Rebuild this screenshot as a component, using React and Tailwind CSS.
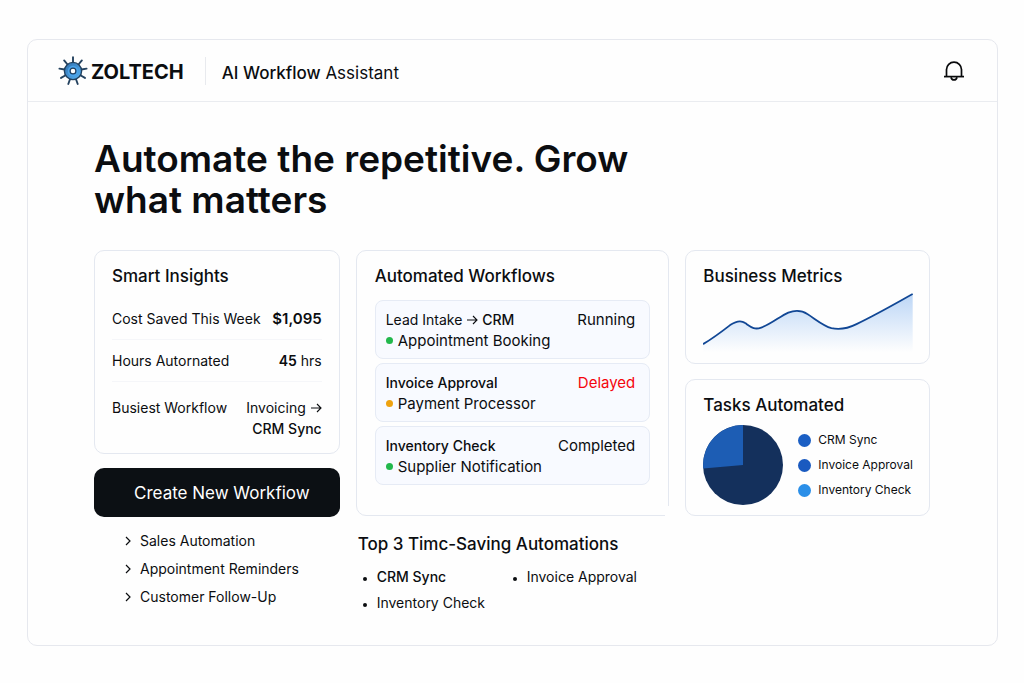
const cardClass = "rounded-[10px] border border-[#e4e8f0] bg-[#fefefe]";
const titleClass = "text-[17px] leading-6 font-medium";

const workflows = [
  { name: <>Lead Intake <Arrow /> <span className="font-medium">CRM</span></>, status: "Running", detail: "Appointment Booking", dot: "bg-[#22b84c]", tone: "" },
  { name: <span className="font-medium">Invoice Approval</span>, status: "Delayed", detail: "Payment Processor", dot: "bg-[#eea20f]", tone: "text-[#f5050d]" },
  { name: <span className="font-medium">Inventory Check</span>, status: "Completed", detail: "Supplier Notification", dot: "bg-[#22b84c]", tone: "" },
];

const legend = [
  { label: "CRM Sync", color: "bg-[#1b5fc4]" },
  { label: "Invoice Approval", color: "bg-[#1a5ac0]" },
  { label: "Inventory Check", color: "bg-[#2b8fe8]" },
];

const shortcuts = ["Sales Automation", "Appointment Reminders", "Customer Follow-Up"];

function Arrow() {
  return (
    <svg viewBox="0 0 12 12" className="inline-block size-3 align-[-1px]" fill="none" stroke="currentColor" strokeWidth="1.1" role="img" aria-label="to">
      <path d="M1 6h10M7 2l4 4-4 4" />
    </svg>
  );
}

function Logo() {
  const rays = [0, 40, 80, 120, 160, 200, 240, 280, 320];
  return (
    <svg viewBox="0 0 30 30" className="size-[30px]" aria-hidden="true">
      <defs>
        <linearGradient id="hub" x1="0" y1="0" x2="1" y2="1">
          <stop offset="0" stopColor="#2f6fae" />
          <stop offset="1" stopColor="#58b4f5" />
        </linearGradient>
      </defs>
      {rays.map((r) => (
        <path key={r} d="M15 6.500V1.200" stroke="#24425f" strokeWidth="1.9" strokeLinecap="round" transform={`rotate(${r} 15 15)`} />
      ))}
      <circle cx="15" cy="15" r="8.6" fill="url(#hub)" stroke="#22415f" strokeWidth="1.4" />
      <circle cx="15" cy="15" r="5.2" fill="#4aa3ea" />
      <circle cx="15" cy="15" r="2.900" fill="#fff" stroke="#1d3d5f" strokeWidth="1.2" />
    </svg>
  );
}

function Bell() {
  return (
    <svg viewBox="0 0 22 22" className="size-[22px]" fill="none" stroke="#08090b" strokeWidth="1.7" aria-hidden="true">
      <path d="M3.500 16.300V9.600a7.500 7.500 0 0 1 15 0v6.700" />
      <path d="M1 16.600h20" />
      <path d="M8 17.200c.4 1.800 1.500 2.700 3 2.700s2.600-.9 3-2.700" />
    </svg>
  );
}

function Header() {
  return (
    <header className="flex items-center border-b border-[#eaecf0] pt-[15px] pr-8 pb-3.5 pl-[30px]">
      <div className="flex items-center gap-[3px]">
        <Logo />
        <span className="pt-0.5 text-xl leading-[30px] font-bold">ZOLTECH</span>
      </div>
      <span className="mr-4 ml-[21px] h-7 w-px bg-[#e8eaee]" />
      <p className="grow pt-1 text-[17px] leading-6"><span className="font-medium">AI Workflow</span> Assistant</p>
      <button type="button" aria-label="Notifications"><Bell /></button>
    </header>
  );
}

function SmartInsights() {
  return (
    <section className={`${cardClass} px-[17px] pt-[13px] pb-3.5`}>
      <h2 className={titleClass}>Smart Insights</h2>
      <dl className="text-sm leading-[21px]">
        <div className="flex justify-between border-b border-[#f5f6f9] pt-5 pb-2.5">
          <dt>Cost Saved This Week</dt>
          <dd className="text-[15px] leading-[21px] font-semibold">$1,095</dd>
        </div>
        <div className="flex justify-between border-b border-[#f5f6f9] py-2.5">
          <dt>Hours Autornated</dt>
          <dd><span className="font-semibold">45</span> hrs</dd>
        </div>
        <div className="flex justify-between pt-[15px]">
          <dt>Busiest Workflow</dt>
          <dd className="text-right">Invoicing <Arrow /><br /><span className="font-medium">CRM Sync</span></dd>
        </div>
      </dl>
    </section>
  );
}

function Workflows() {
  return (
    <section className={`${cardClass} relative rounded-br-none px-[18px] pt-[13px] pb-[30px]`}>
      <h2 className={titleClass}>Automated Workflows</h2>
      <ul className="mt-3 flex flex-col gap-1 text-[15px] leading-[21px]">
        {workflows.map((w) => (
          <li key={w.detail} className="rounded-lg border border-[#e6ebf5] bg-[#f8faff] px-2.5 pt-2 pb-[7px]">
            <div className="flex justify-between pr-1">
              <span className="text-sm leading-[21px]">{w.name}</span>
              <span className={w.tone}>{w.status}</span>
            </div>
            <div className="flex items-center gap-[5px]">
              <span className={`size-[7px] rounded-full ${w.dot}`} />
              {w.detail}
            </div>
          </li>
        ))}
      </ul>
      <span className="absolute -right-px -bottom-px h-2.5 w-1 bg-[#fefefe]" />
    </section>
  );
}

function BusinessMetrics() {
  const line = "M0 52C10 46 18 40 27 33C33 29 38 28 42 31C48 35 51 38 58 35.500C68 32 77 24 85 20.500C92 18 98 18 104 22C112 27 120 34 128 36C137 38 145 36 153 32C172 23 191 12 209 2";
  return (
    <section className={`${cardClass} pt-[13px] pr-4 pb-[11px] pl-[17px]`}>
      <h2 className={titleClass}>Business Metrics</h2>
      <svg viewBox="0 0 209 60" className="mt-1 block w-full" role="img" aria-label="Business metrics trend">
        <defs>
          <linearGradient id="area" x1="0" y1="0" x2="0" y2="1">
            <stop offset="0" stopColor="#bcd6f6" />
            <stop offset="1" stopColor="#fefefe" />
          </linearGradient>
        </defs>
        <path d={`${line}V60H0Z`} fill="url(#area)" />
        <path d={line} fill="none" stroke="#114795" strokeWidth="1.8" />
      </svg>
    </section>
  );
}

function TasksAutomated() {
  return (
    <section className={`${cardClass} px-[17px] pt-[13px] pb-2.5`}>
      <h2 className={titleClass}>Tasks Automated</h2>
      <div className="mt-2 flex items-center gap-[15px]">
        <svg viewBox="0 0 80 80" className="size-20 shrink-0" role="img" aria-label="Share of automated tasks">
          <circle cx="40" cy="40" r="40" fill="#14305c" />
          <path d="M40 40V0A40 40 0 0 0 .2 43.500Z" fill="#1d5db4" />
        </svg>
        <ul className="flex flex-col gap-[5px] text-xs leading-5">
          {legend.map((l) => (
            <li key={l.label} className="flex items-center gap-[7px] whitespace-nowrap">
              <span className={`size-[13px] rounded-full ${l.color}`} />
              {l.label}
            </li>
          ))}
        </ul>
      </div>
    </section>
  );
}

function TopAutomations() {
  return (
    <section className="px-0.5 pt-4">
      <h2 className={titleClass}>Top 3 Timc-Saving Automations</h2>
      <ul className="mt-2.5 grid list-disc grid-cols-[150px_auto] gap-y-[5px] pl-[19px] text-sm leading-[21px] marker:text-[11px]">
        <li className="font-medium">CRM Sync</li>
        <li>Invoice Approval</li>
        <li>Inventory Check</li>
      </ul>
    </section>
  );
}

export default function App() {
  return (
    <div className="min-h-screen bg-[#fefefe] pt-[39px] pr-[26px] pb-[38px] pl-[27px] font-['Inter','Liberation_Sans',sans-serif] text-[#0b0d10]">
      <div className="rounded-[10px] border border-[#e6e8ee]">
        <Header />
        <main className="pt-9 pr-[67px] pb-8 pl-[66px]">
          <h1 className="max-w-[600px] text-[37px] leading-[41px] font-semibold">Automate the repetitive. Grow what matters</h1>
          <div className="mt-[30px] grid grid-cols-[minmax(0,246fr)_minmax(0,314fr)_minmax(0,245fr)] items-start gap-4">
            <div>
              <SmartInsights />
              <button type="button" className="mt-3.5 w-full rounded-[10px] bg-[#0c1014] pt-[13px] pb-3 pl-2.5 text-[17px] leading-6 text-white">Create New Workfiow</button>
              <ul className="mt-[13px] flex flex-col gap-[7px] pl-[30px] text-sm leading-[21px]">
                {shortcuts.map((s) => (
                  <li key={s}>
                    <a href="#" className="flex items-center gap-2">
                      <svg viewBox="0 0 8 10" className="h-2.5 w-2" fill="none" stroke="currentColor" strokeWidth="1.2" aria-hidden="true"><path d="M2 1l4 4-4 4" /></svg>
                      {s}
                    </a>
                  </li>
                ))}
              </ul>
            </div>
            <div>
              <Workflows />
              <TopAutomations />
            </div>
            <div className="flex flex-col gap-[15px]">
              <BusinessMetrics />
              <TasksAutomated />
            </div>
          </div>
        </main>
      </div>
    </div>
  );
}
